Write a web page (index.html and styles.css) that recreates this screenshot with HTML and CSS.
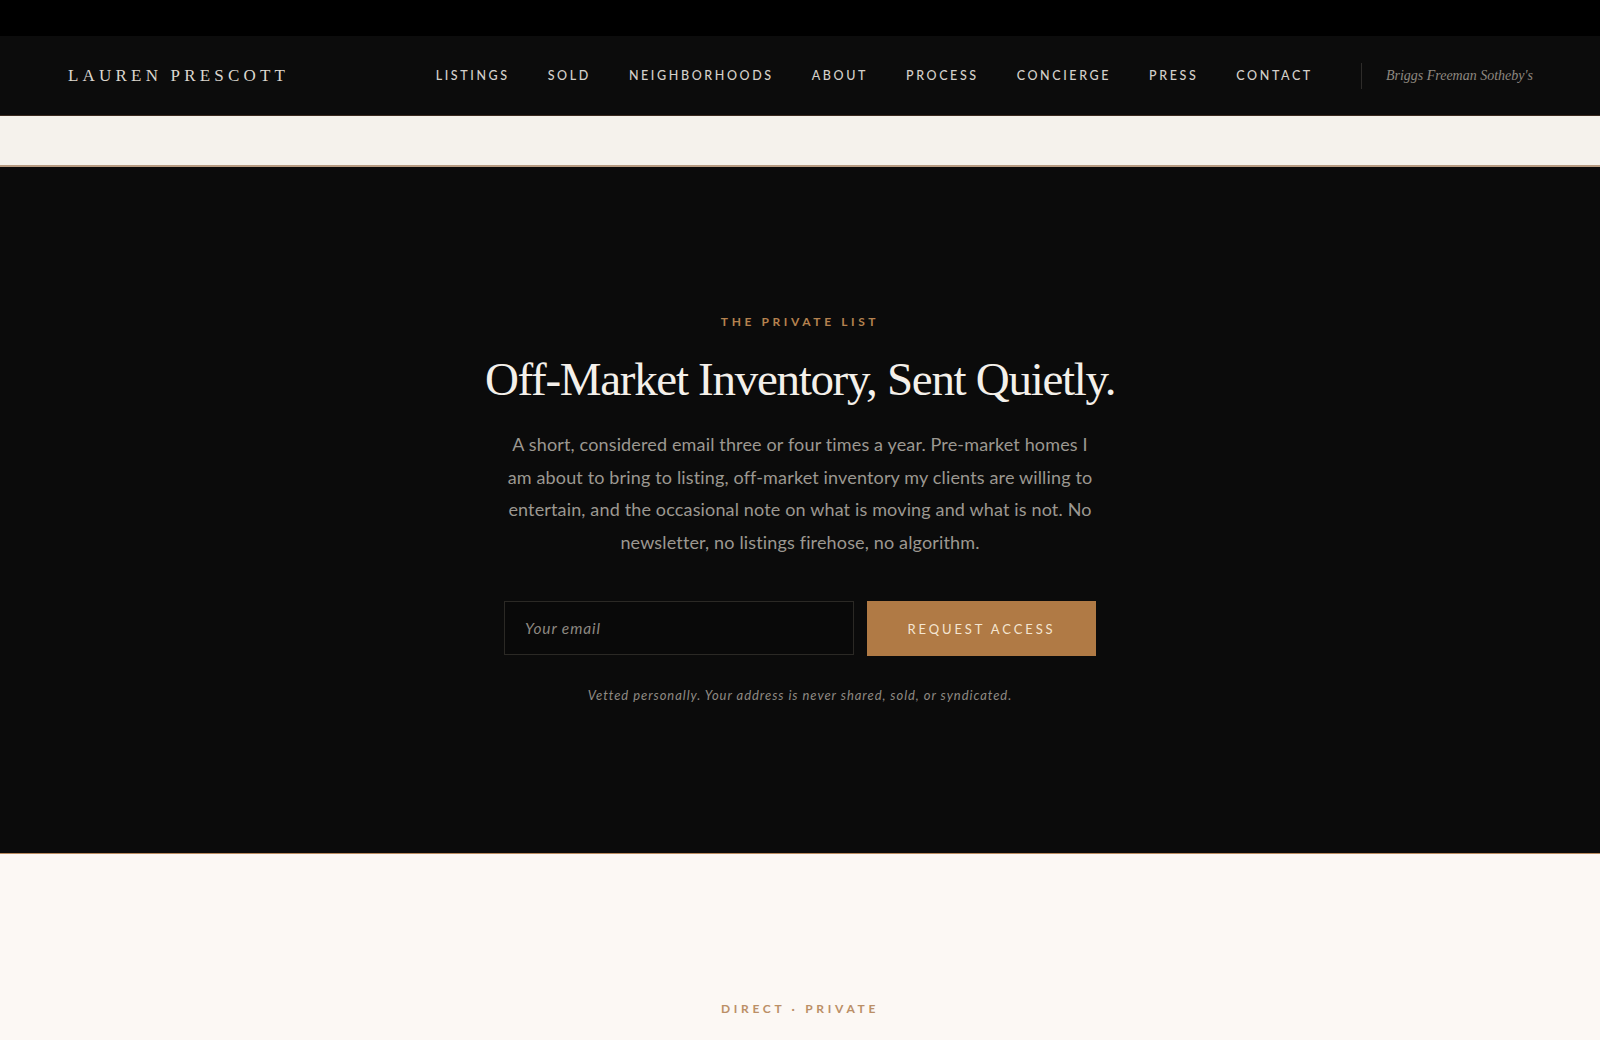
FILE: index.html
```html
<!DOCTYPE html>
<html lang="en">
<head>
<meta charset="utf-8">
<title>Lauren Prescott — The Private List</title>
<link rel="stylesheet" href="styles.css">
</head>
<body>
<div class="topbar"></div>
<header class="site-header">
  <a class="logo" href="#">LAUREN PRESCOTT</a>
  <div class="header-right">
    <nav class="main-nav">
      <a href="#">LISTINGS</a>
      <a href="#">SOLD</a>
      <a href="#">NEIGHBORHOODS</a>
      <a href="#">ABOUT</a>
      <a href="#">PROCESS</a>
      <a href="#">CONCIERGE</a>
      <a href="#">PRESS</a>
      <a href="#">CONTACT</a>
    </nav>
    <span class="brokerage">Briggs Freeman Sotheby's</span>
  </div>
</header>
<div class="band"></div>
<section class="hero">
  <p class="eyebrow">THE PRIVATE LIST</p>
  <h1 class="hero-title">Off-Market Inventory, Sent Quietly.</h1>
  <p class="hero-copy">A short, considered email three or four times a year. Pre-market homes I am about to bring to listing, off-market inventory my clients are willing to entertain, and the occasional note on what is moving and what is not. No newsletter, no listings firehose, no algorithm.</p>
  <form class="signup">
    <input class="signup-input" type="email" placeholder="Your email">
    <button class="signup-button" type="button">REQUEST ACCESS</button>
  </form>
  <p class="fineprint">Vetted personally. Your address is never shared, sold, or syndicated.</p>
</section>
<section class="lower">
  <p class="eyebrow eyebrow-light">DIRECT · PRIVATE</p>
</section>
</body>
</html>
```

FILE: styles.css
```css
* { box-sizing: border-box; }
html, body { margin: 0; padding: 0; }
body {
  background: #fcf8f4;
  font-family: "Lato", "Liberation Sans", sans-serif;
  color: #d8d3cc;
}
.topbar { height: 36px; background: #000; }

.site-header {
  height: 80px;
  background: #0c0c0c;
  border-bottom: 1px solid #3b2b20;
  display: flex;
  align-items: center;
  justify-content: space-between;
  padding: 0 67px 0 68px;
}
.logo {
  font-family: "Liberation Serif", "DejaVu Serif", serif;
  font-size: 17px;
  letter-spacing: 4.2px;
  color: #dcd7cf;
  text-decoration: none;
}
.header-right { display: flex; align-items: center; }
.main-nav { display: flex; gap: 38px; }
.main-nav a {
  font-family: "Lato", "Liberation Sans", sans-serif;
  font-size: 12.5px;
  font-weight: 500;
  letter-spacing: 2.6px;
  color: #d4d0ca;
  text-decoration: none;
}
.brokerage {
  margin-left: 48px;
  padding-left: 24px;
  border-left: 1px solid #2e2c2a;
  height: 26px;
  display: flex;
  align-items: center;
  font-family: "Liberation Serif", "DejaVu Serif", serif;
  font-style: italic;
  font-size: 14px;
  color: #8e8880;
}

.band {
  height: 51px;
  background: #f5f2ec;
  border-bottom: 2px solid #b69a80;
}

.hero {
  background: #0b0b0b;
  border-bottom: 1px solid #b98a5e;
  padding: 147px 0 148px;
  display: flex;
  flex-direction: column;
  align-items: center;
  text-align: center;
}
.eyebrow {
  margin: 0;
  font-family: "Lato", "Liberation Sans", sans-serif;
  font-size: 12px;
  font-weight: 700;
  line-height: 16px;
  letter-spacing: 3.6px;
  color: #b5824f;
}
.hero-title {
  margin: 21px 0 0;
  font-family: "Liberation Serif", "DejaVu Serif", serif;
  font-weight: 400;
  font-size: 47px;
  line-height: 56px;
  letter-spacing: -1.3px;
  color: #f4f0ea;
}
.hero-copy {
  margin: 21px 0 0;
  width: 595px;
  font-family: "Lato", "Liberation Sans", sans-serif;
  font-size: 18px;
  line-height: 32.5px;
  letter-spacing: 0.15px;
  color: #9c9891;
}
.signup {
  margin-top: 43px;
  display: flex;
  gap: 13px;
  width: 592px;
}
.signup-input {
  flex: 0 0 350px;
  height: 54px;
  background: #090909;
  border: 1px solid #2b2925;
  padding: 0 20px;
  font-family: "Lato", "Liberation Sans", sans-serif;
  font-style: italic;
  font-size: 15.5px;
  letter-spacing: 0.9px;
  color: #ddd;
  outline: none;
}
.signup-input::placeholder { color: #8d8881; }
.signup-button {
  flex: 1;
  height: 55px;
  background: #b07a45;
  border: 0;
  font-family: "Lato", "Liberation Sans", sans-serif;
  font-size: 13px;
  font-weight: 400;
  letter-spacing: 2.9px;
  color: #f5e6d2;
  cursor: pointer;
}
.fineprint {
  margin: 29px 0 0;
  font-family: "Lato", "Liberation Sans", sans-serif;
  font-style: italic;
  font-size: 13px;
  line-height: 20px;
  letter-spacing: 0.95px;
  color: #8f8a83;
}

.lower {
  background: #fcf8f4;
  padding: 147px 0 80px;
  display: flex;
  justify-content: center;
}
.eyebrow-light { color: #bb8f66; letter-spacing: 3.7px; }
```
